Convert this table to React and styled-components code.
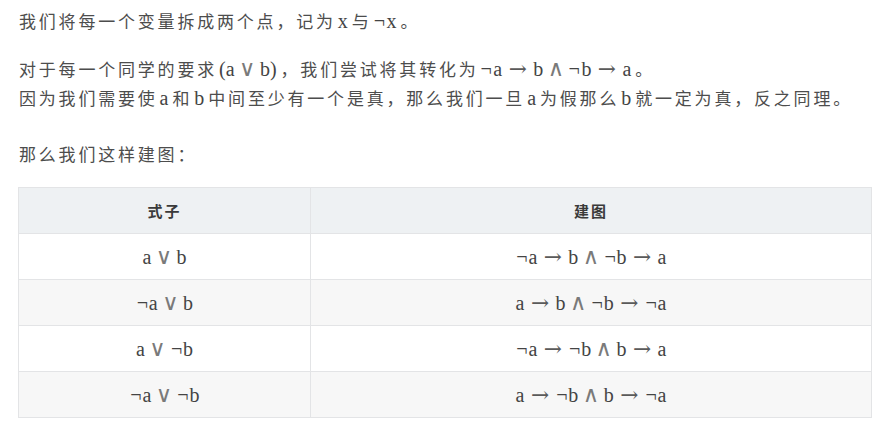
import React from "react";
import styled, { createGlobalStyle } from "styled-components";

const GlobalStyle = createGlobalStyle`
  body {
    margin: 0;
    background: #ffffff;
    font-family: "Noto Sans CJK SC", "Noto Sans", sans-serif;
    color: #4d4d4d;
  }
`;

const Page = styled.div`
  padding: 6px 10px 0 18px;
  width: 854px;
`;

const Para = styled.p`
  margin: 0 0 ${(p) => p.$gap || 19}px 1px;
  font-size: 17px;
  letter-spacing: 2.8px;
  line-height: 29px;
  white-space: nowrap;
`;

const MathText = styled.span`
  font-family: "Liberation Serif", "DejaVu Serif", serif;
  font-size: 20px;
  line-height: 1;
  letter-spacing: 0;
  color: #444;
  margin: 0 ${(p) => (p.$tight ? 0 : 4)}px 0 ${(p) => (p.$tight ? 0 : 2)}px;
`;

const Neg = styled.span`
  display: inline-block;
  width: 0.64em;
  font-family: "Liberation Serif", serif;
`;

const Bin = styled.span`
  display: inline-block;
  margin: 0 0.2em;
  font-family: "DejaVu Sans", sans-serif;
  font-size: 1.12em;
  line-height: 1;
  color: #7a7a7a;
`;

const Arrow = styled.span`
  display: inline-block;
  margin: 0 0.3em;
  font-family: "DejaVu Serif", serif;
  font-weight: 200;
  font-size: 1.08em;
  color: #5a5a5a;
`;

const Table = styled.table`
  width: 854px;
  border-collapse: collapse;
  & th,
  & td {
    border: 1px solid #e3e4e6;
    height: 45px;
    padding: 0;
    text-align: center;
  }
  & th {
    background: #eef1f3;
    font-size: 15px;
    letter-spacing: 2px;
    font-weight: 700;
    color: #3a3a3a;
  }
  & th:first-child {
    width: 291px;
  }
`;

const Row = styled.tr`
  background: ${(p) => (p.$even ? "#f7f7f7" : "#ffffff")};
`;

function M({ tokens, tight }) {
  return (
    <MathText $tight={tight}>
      {tokens.map((t, i) => {
        if (t === "∨" || t === "∧") return <Bin key={i}>{t}</Bin>;
        if (t === "→") return <Arrow key={i}>{t}</Arrow>;
        if (t.startsWith("¬"))
          return (
            <span key={i}>
              <Neg>¬</Neg>
              {t.slice(1)}
            </span>
          );
        return <span key={i}>{t}</span>;
      })}
    </MathText>
  );
}

const rows = [
  [["a", "∨", "b"], ["¬a", "→", "b", "∧", "¬b", "→", "a"]],
  [["¬a", "∨", "b"], ["a", "→", "b", "∧", "¬b", "→", "¬a"]],
  [["a", "∨", "¬b"], ["¬a", "→", "¬b", "∧", "b", "→", "a"]],
  [["¬a", "∨", "¬b"], ["a", "→", "¬b", "∧", "b", "→", "¬a"]],
];

export default function App() {
  return (
    <>
      <GlobalStyle />
      <Page>
        <Para>
          我们将每一个变量拆成两个点，记为<M tokens={["x"]} />与<M tokens={["¬x"]} />。
        </Para>
        <Para $gap={27}>
          对于每一个同学的要求<M tokens={["(a", "∨", "b)"]} />，我们尝试将其转化为
          <M tokens={["¬a", "→", "b", "∧", "¬b", "→", "a"]} />。
          <br />
          因为我们需要使<M tokens={["a"]} />和<M tokens={["b"]} />中间至少有一个是真，那么我们一旦
          <M tokens={["a"]} />为假那么<M tokens={["b"]} />就一定为真，反之同理。
        </Para>
        <Para $gap={19}>那么我们这样建图：</Para>
        <Table>
          <thead>
            <tr>
              <th>式子</th>
              <th>建图</th>
            </tr>
          </thead>
          <tbody>
            {rows.map((r, i) => (
              <Row key={i} $even={i % 2 === 1}>
                <td>
                  <M tokens={r[0]} tight />
                </td>
                <td>
                  <M tokens={r[1]} tight />
                </td>
              </Row>
            ))}
          </tbody>
        </Table>
      </Page>
    </>
  );
}
